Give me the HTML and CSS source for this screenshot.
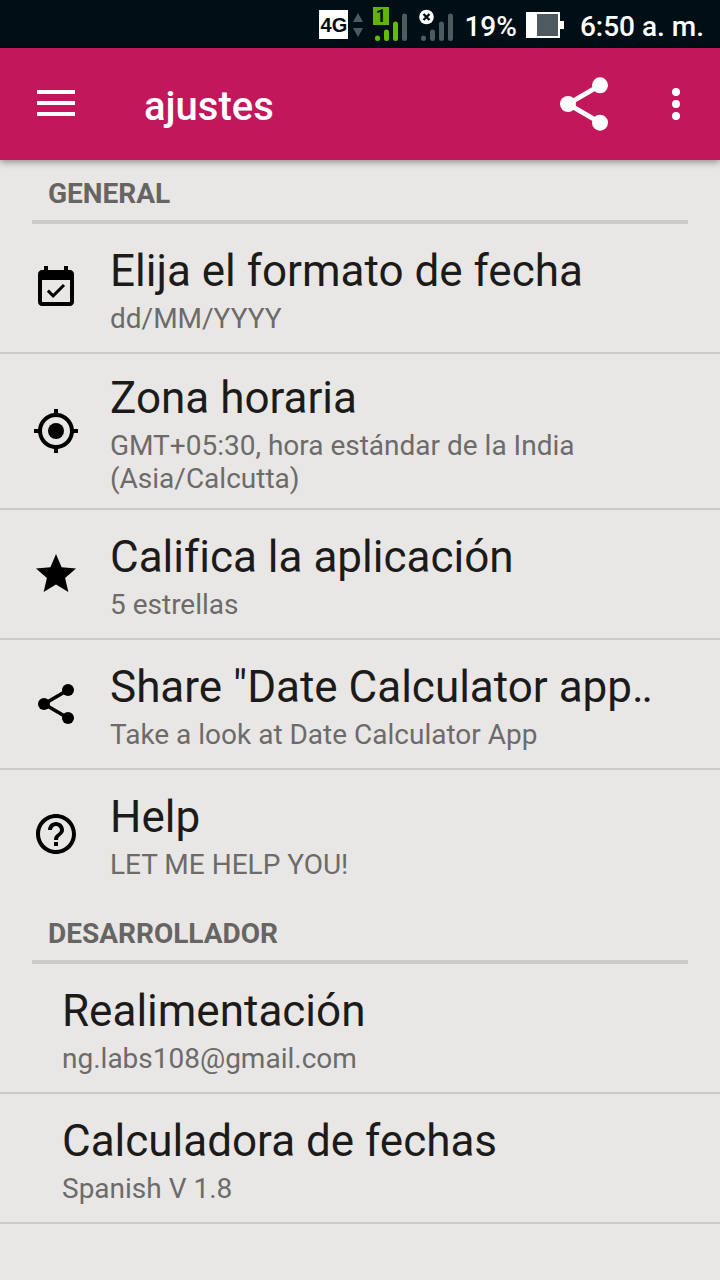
FILE: index.html
```html
<!DOCTYPE html>
<html lang="es">
<head>
  <meta charset="UTF-8">
  <meta name="viewport" content="width=device-width, initial-scale=1.0">
  <title>ajustes</title>
  <link rel="stylesheet" href="styles.css">
</head>
<body>
  <!-- Status bar -->
  <div class="status-bar">
    <span class="network">4G</span>
    <svg class="arrows" width="10" height="24" viewBox="0 0 10 24" fill="#4d5a60">
      <path d="M5 0l5 9H0zM5 24l5-9H0z"/>
    </svg>
    <svg class="signal-one" width="36" height="36" viewBox="0 0 36 36">
      <rect x="1" y="1" width="16" height="18" fill="#5fb404"/>
      <text x="9" y="16" text-anchor="middle" class="sim">1</text>
      <g stroke-width="5" stroke-linecap="round" stroke="#62bd00">
        <path d="M5.5 32v.5M14.5 26v6.5M23.5 18v14.5"/>
        <path d="M32.5 10v22.5" stroke="#4d5a60"/>
      </g>
    </svg>
    <svg class="signal-two" width="36" height="36" viewBox="0 0 36 36">
      <g stroke-width="5" stroke-linecap="round" stroke="#4d5a60">
        <path d="M5.5 32v.5M14.5 26v6.5M23.5 18v14.5M32.5 10v22.5"/>
      </g>
      <circle cx="8.500" cy="11" r="7.300" fill="#fff"/>
      <path d="M5.5 8l6 6M11.5 8l-6 6" stroke="#000e16" stroke-width="2.400"/>
    </svg>
    <span class="percent">19%</span>
    <svg class="battery" width="38" height="26" viewBox="0 0 38 26">
      <path d="M0 0h34v9h4v8h-4v9H0z" fill="#fff"/>
      <path d="M11 2h21v22H11z" fill="#4d5a60"/>
    </svg>
    <span class="clock">6:50 a. m.</span>
  </div>

  <!-- Toolbar -->
  <div class="toolbar">
    <svg class="menu" width="38" height="26" viewBox="0 0 38 26" fill="#fff">
      <path d="M0 0h38v4H0zM0 11h38v4H0zM0 22h38v4H0z"/>
    </svg>
    <h1 class="title">ajustes</h1>
    <svg class="share" width="64" height="64" viewBox="0 0 24 24">
      <path d="M18 5L6 12l12 7" fill="none" stroke="#fff" stroke-width="1.800"/>
      <g fill="#fff"><circle cx="18" cy="5" r="3"/><circle cx="6" cy="12" r="3"/><circle cx="18" cy="19" r="3"/></g>
    </svg>
    <svg width="48" height="48" viewBox="0 0 24 24" fill="#fff">
      <circle cx="12" cy="6" r="2"/><circle cx="12" cy="12" r="2"/><circle cx="12" cy="18" r="2"/>
    </svg>
  </div>

  <!-- Settings -->
  <div class="settings">
    <h2 class="category">GENERAL</h2>
    <div class="row">
      <svg class="icon" viewBox="0 0 24 24">
        <path d="M16.530 11.060L15.470 10l-4.880 4.880-2.120-2.120-1.060 1.060L10.590 17l5.940-5.940zM19 3h-1V1h-2v2H8V1H6v2H5c-1.110 0-1.990.9-1.990 2L3 19c0 1.100.890 2 2 2h14c1.100 0 2-.9 2-2V5c0-1.100-.9-2-2-2zm0 16H5V8h14v11z"/>
      </svg>
      <div class="text">
        <div class="name">Elija el formato de fecha</div>
        <div class="summary">dd/MM/YYYY</div>
      </div>
    </div>
    <div class="row">
      <svg class="icon" viewBox="0 0 24 24">
        <circle cx="12" cy="12" r="4"/>
        <path d="M20.940 11c-.46-4.170-3.770-7.480-7.940-7.940V1h-2v2.060C6.830 3.520 3.520 6.830 3.060 11H1v2h2.060c.46 4.170 3.770 7.480 7.940 7.940V23h2v-2.060c4.170-.46 7.480-3.770 7.940-7.940H23v-2h-2.060zM12 19c-3.870 0-7-3.130-7-7s3.130-7 7-7 7 3.130 7 7-3.130 7-7 7z"/>
      </svg>
      <div class="text">
        <div class="name">Zona horaria</div>
        <div class="summary">GMT+05:30, hora estándar de la India<br>(Asia/Calcutta)</div>
      </div>
    </div>
    <div class="row">
      <svg class="icon" viewBox="0 0 24 24">
        <path d="M12 17.270L18.180 21l-1.640-7.030L22 9.240l-7.190-.61L12 2 9.190 8.630 2 9.240l5.460 4.730L5.820 21z"/>
      </svg>
      <div class="text">
        <div class="name">Califica la aplicación</div>
        <div class="summary">5 estrellas</div>
      </div>
    </div>
    <div class="row">
      <svg class="icon" viewBox="0 0 24 24">
        <path d="M18 5L6 12l12 7" fill="none" stroke="#000" stroke-width="1.800"/>
        <circle cx="18" cy="5" r="3"/><circle cx="6" cy="12" r="3"/><circle cx="18" cy="19" r="3"/>
      </svg>
      <div class="text">
        <div class="name">Share "Date Calculator app‥</div>
        <div class="summary">Take a look at Date Calculator App</div>
      </div>
    </div>
    <div class="row last">
      <svg class="icon" viewBox="0 0 24 24">
        <path d="M11 18h2v-2h-2v2zm1-16C6.480 2 2 6.480 2 12s4.480 10 10 10 10-4.480 10-10S17.520 2 12 2zm0 18c-4.410 0-8-3.590-8-8s3.590-8 8-8 8 3.590 8 8-3.590 8-8 8zm0-14c-2.210 0-4 1.790-4 4h2c0-1.100.9-2 2-2s2 .9 2 2c0 2-3 1.750-3 5h2c0-2.250 3-2.500 3-5 0-2.210-1.790-4-4-4z"/>
      </svg>
      <div class="text">
        <div class="name">Help</div>
        <div class="summary">LET ME HELP YOU!</div>
      </div>
    </div>

    <h2 class="category">DESARROLLADOR</h2>
    <div class="row plain">
      <div class="text">
        <div class="name">Realimentación</div>
        <div class="summary">ng.labs108@gmail.com</div>
      </div>
    </div>
    <div class="row plain">
      <div class="text">
        <div class="name">Calculadora de fechas</div>
        <div class="summary">Spanish V 1.8</div>
      </div>
    </div>
  </div>
</body>
</html>
```
FILE: styles.css
```css
* {
  box-sizing: border-box;
}

body {
  margin: 0;
  height: 1280px;
  overflow: hidden;
  background: #e8e7e5;
  font-family: Roboto, sans-serif;
  font-variant-ligatures: none;
}

svg {
  display: block;
  flex-shrink: 0;
}

/* Status bar */
.status-bar {
  display: flex;
  align-items: center;
  justify-content: flex-end;
  height: 48px;
  padding: 2px 16px 0 0;
  background: #000e16;
  color: #fff;
  font-size: 28px;
  font-weight: 500;
  white-space: nowrap;
}

.network {
  width: 29px;
  height: 29px;
  margin-bottom: 1px;
  background: #fff;
  color: #000e16;
  font-family: "Liberation Sans", sans-serif;
  font-size: 20px;
  font-weight: 700;
  line-height: 30px;
  text-align: center;
}

.arrows {
  margin: 0 0 1px 5px;
}

.signal-one {
  margin: 0 10px 2px 9px;
}

.signal-two {
  margin: 0 10px 2px 0;
}

.sim {
  font-size: 18px;
  font-weight: 700;
  fill: #000e16;
}

.percent,
.clock {
  line-height: 40px;
  padding-top: 3px;
}

.battery {
  margin: 0 16px 0 9px;
}

/* Toolbar */
.toolbar {
  position: relative;
  display: flex;
  align-items: center;
  height: 112px;
  padding: 0 20px 0 37px;
  background: #c2185b;
  color: #fff;
  box-shadow: 0 2px 7px rgba(0, 0, 0, 0.4);
}

.menu {
  margin-bottom: 2px;
}

.title {
  flex: 1;
  margin: 6px 0 0 69px;
  font-size: 40px;
  font-weight: 500;
  line-height: 48px;
}

.share {
  margin-right: 36px;
}

/* Settings list */
.category {
  height: 64px;
  margin: 0 32px;
  padding: 17px 16px 0;
  border-bottom: 4px solid #cbcac8;
  color: #666563;
  font-size: 28px;
  font-weight: 700;
  line-height: 33px;
}

.row {
  display: flex;
  align-items: center;
  min-height: 130px;
  padding: 0 32px;
  border-bottom: 2px solid #c9c8c6;
}

.row.last {
  border-bottom-color: transparent;
}

.row.plain {
  padding-left: 62px;
}

.icon {
  width: 48px;
  height: 48px;
  margin-right: 30px;
}

.text {
  padding: 17.5px 0 13.5px;
  white-space: nowrap;
}

.name {
  margin-bottom: 5px;
  color: #1c1b1a;
  font-size: 44px;
  line-height: 52px;
}

.summary {
  color: #6c6b6a;
  font-size: 28px;
  line-height: 33px;
}
```
